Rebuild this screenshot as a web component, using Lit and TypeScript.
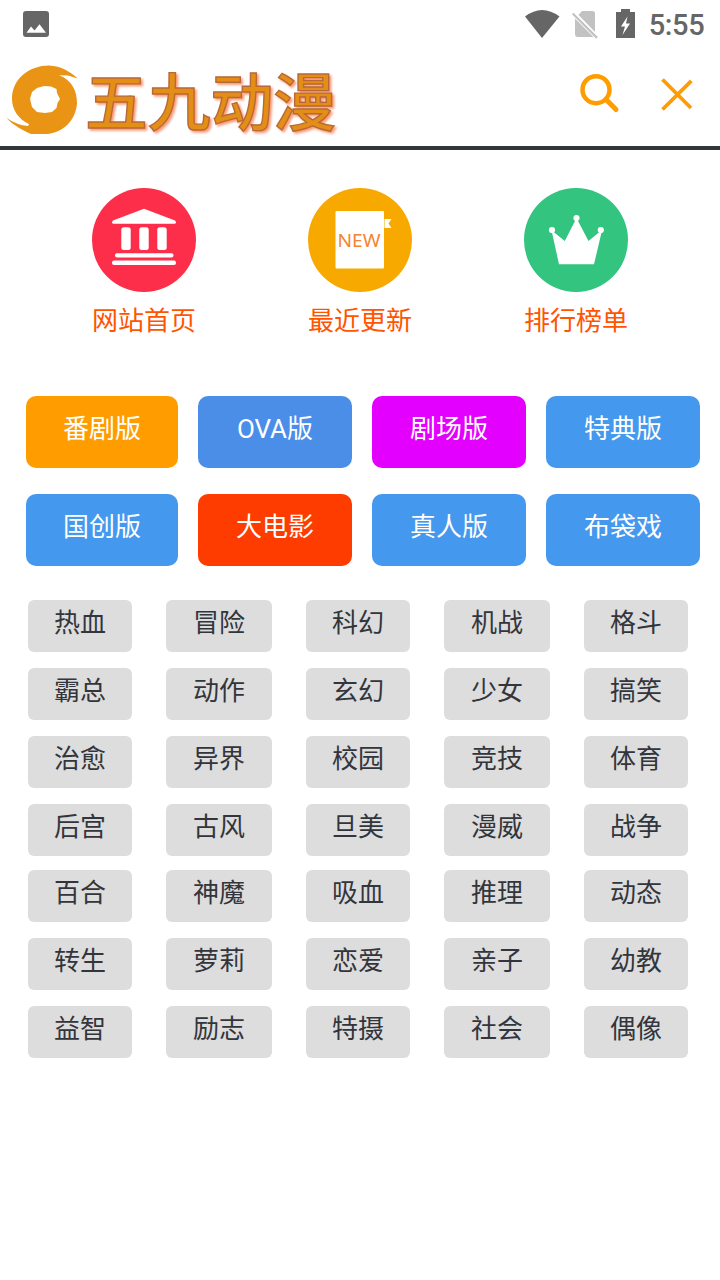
import { LitElement, html, css, svg } from "lit";
import { customElement } from "lit/decorators.js";

const CATEGORIES: [string, string][] = [
  ["番剧版", "orange"], ["OVA版", "indigo"], ["剧场版", "magenta"], ["特典版", "blue"],
  ["国创版", "blue"], ["大电影", "red"], ["真人版", "blue"], ["布袋戏", "blue"],
];

const TAGS =
  "热血 冒险 科幻 机战 格斗 霸总 动作 玄幻 少女 搞笑 治愈 异界 校园 竞技 体育 后宫 古风 旦美 漫威 战争 百合 神魔 吸血 推理 动态 转生 萝莉 恋爱 亲子 幼教 益智 励志 特摄 社会 偶像".split(" ");

const bank = svg`
  <circle cx="52" cy="52" r="52" fill="#fc2e49"/>
  <path d="M52 20.700 83 32.500Q85.500 35.700 82 35.700H22Q18.500 35.700 21 32.500Z" fill="#fff"/>
  <g fill="#fff">
    <rect x="29.300" y="39.300" width="9.400" height="22.700" rx="2.500"/>
    <rect x="47.300" y="39.300" width="9.400" height="22.700" rx="2.500"/>
    <rect x="65.300" y="39.300" width="9.400" height="22.700" rx="2.500"/>
    <rect x="23" y="65.300" width="58.500" height="4.200" rx="2"/>
    <rect x="20" y="72.500" width="64" height="4.500" rx="2"/>
  </g>`;

const fresh = svg`
  <circle cx="52" cy="52" r="52" fill="#f7a900"/>
  <rect x="27.500" y="23" width="48.500" height="57.500" rx="1" fill="#fff"/>
  <path d="M76.500 31H83.500L80.500 35.500 83.500 40H76.500Z" fill="#fff"/>
  <text class="new" x="29.500" y="59" textLength="43" lengthAdjust="spacingAndGlyphs">NEW</text>`;

const crown = svg`
  <circle cx="52" cy="52" r="52" fill="#33c47f"/>
  <g fill="#fff">
    <circle cx="52.500" cy="30" r="3.100"/><circle cx="28" cy="42" r="3.100"/><circle cx="76.800" cy="42" r="3.100"/>
    <path d="M51.500 32H53.500L64.500 53 76 43.500 77.500 44.500 70 76.300H35L28 44.500 29 43.500 40.800 53Z"/>
  </g>`;

const SHORTCUTS = [
  { label: "网站首页", icon: bank },
  { label: "最近更新", icon: fresh },
  { label: "排行榜单", icon: crown },
];

@customElement("app-root")
export class AppRoot extends LitElement {
  static styles = css`
    :host { display: block; height: 1280px; background: #fff; overflow: hidden;
      font-family: Roboto, "Noto Sans CJK SC", sans-serif; font-size: 26px; color: #33353c; }
    svg { display: block; }
    .status { height: 50px; display: flex; }
    .status svg { width: 720px; height: 50px; }
    .clock { font: 500 29px Roboto, sans-serif; fill: #666; }
    .header { height: 96px; border-bottom: 4px solid #33353c; display: flex; justify-content: space-between; }
    .brand { font: 500 63px "Noto Sans CJK SC", sans-serif; fill: #e38f15; stroke: #b8683a; stroke-width: 1.4px;
      filter: drop-shadow(2px 2px 1.300px rgba(255, 110, 60, .7)); }
    .new { font: 18px "Noto Sans", "Open Sans", sans-serif; fill: #f58432; }
    .shortcuts { display: grid; grid-template-columns: repeat(3, 216px); padding: 38px 36px 0; height: 208px; }
    .shortcut { display: flex; flex-direction: column; align-items: center; color: #ff5400; }
    .shortcut span { line-height: 38px; margin-top: 10px; }
    .cats { display: grid; grid-template-columns: 152px 154px 154px 154px; gap: 26px 20px; padding-left: 26px; }
    .cat { height: 72px; line-height: 66px; text-align: center; color: #fff; border-radius: 10px; }
    .orange { background: #ff9d00; }
    .indigo { background: #4b8ee8; }
    .magenta { background: #e400ff; }
    .blue { background: #4498ee; }
    .red { background: #ff3c00; }
    .tags { display: grid; grid-template-columns: 104px 106px 104px 106px 104px;
      grid-template-rows: 52px 52px 52px 50px 52px 52px 52px; gap: 16px 34px; padding: 34px 0 0 28px; }
    .tag { height: 52px; line-height: 46px; text-align: center; background: #ddd; border-radius: 6px; }
  `;

  render() {
    return html`
      <div class="status">
        <svg viewBox="0 0 720 50">
          <path fill="#666" fill-rule="evenodd" d="M26 11H46Q49 11 49 14V34Q49 37 46 37H26Q23 37 23 34V14Q23 11 26 11ZM26.500 32.700H46L39.500 24.300 34.500 30.600 31 26.500Z"/>
          <path fill="#666" d="M525 16.500Q542 3.500 559.500 16.500L542 38Z"/>
          <path fill="#c2c2c2" d="M582 11H592.500Q595 11 595 13.500V32L578.500 15ZM575 18.500 593.500 37H578Q575 37 575 34ZM573.500 12.800 597.800 37 596.300 38.700 572 14.300Z"/>
          <path fill="#666" fill-rule="evenodd" d="M621 9H630V12H635V38H616V12H621ZM627.500 16.500 621 26.500H625L622.500 35 630 23.500H626Z"/>
          <text class="clock" x="648.700" y="35" textLength="56">5:55</text>
        </svg>
      </div>
      <div class="header">
        <svg width="350" height="96" viewBox="0 50 350 96">
          <path fill="#e99414" fill-rule="evenodd" d="M77.500 78.500 68 75.500 59 75.200C72 80 77 91 77 103C76 121 62 133 47 134H31C22 130 13 125 6.500 118Q17 125 28 126L29 124C18 119 12 109 12 99C12 79 29 65.500 49 65.500C61 66 71 72 77.500 78.500ZM44 86 37 88 32 92 30 99 32 107 37 112 45 113 52 112 56.500 108 57.500 103 60 99 57 93 56.500 89 51 86.500Z"/>
          <text class="brand" x="85" y="124.500" textLength="251" lengthAdjust="spacingAndGlyphs">五九动漫</text>
        </svg>
        <svg width="150" height="96" viewBox="570 50 150 96" fill="none" stroke="#ff9d00">
          <circle cx="596" cy="89.700" r="13.500" stroke-width="4.500"/>
          <path d="M606 99.500 616 109.500" stroke-width="5" stroke-linecap="round"/>
          <path d="M662.500 79.500 691 108M691.300 80.800 662.500 109.500" stroke-width="3.800"/>
        </svg>
      </div>
      <div class="shortcuts">
        ${SHORTCUTS.map((s) => html`<div class="shortcut"><svg width="104" height="104">${s.icon}</svg><span>${s.label}</span></div>`)}
      </div>
      <div class="cats">${CATEGORIES.map(([t, c]) => html`<div class="cat ${c}">${t}</div>`)}</div>
      <div class="tags">${TAGS.map((t) => html`<div class="tag">${t}</div>`)}</div>
    `;
  }
}
